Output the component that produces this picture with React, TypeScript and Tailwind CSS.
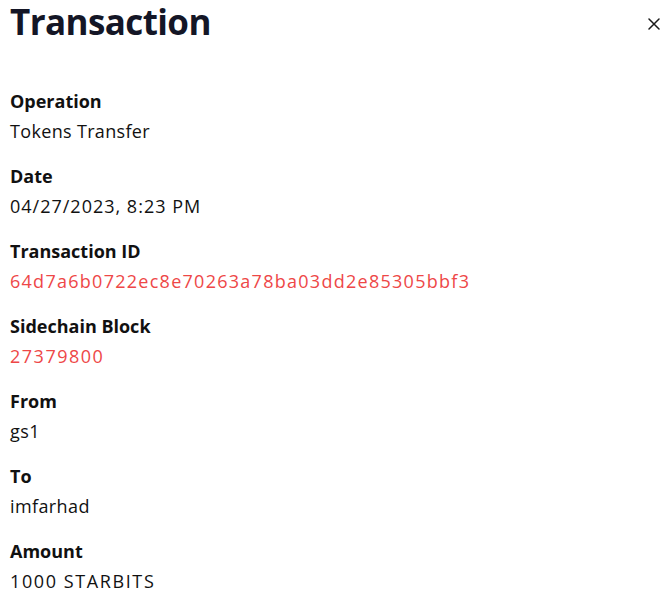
import React from "react";

const items: { label: string; value: string; red?: boolean; track: string }[] = [
  { label: "Operation", value: "Tokens Transfer", track: "tracking-[0.33px]" },
  { label: "Date", value: "04/27/2023, 8:23 PM", track: "tracking-[1px]" },
  { label: "Transaction ID", value: "64d7a6b0722ec8e70263a78ba03dd2e85305bbf3", red: true, track: "tracking-[1.27px]" },
  { label: "Sidechain Block", value: "27379800", red: true, track: "tracking-[1.5px]" },
  { label: "From", value: "gs1", track: "tracking-[0.5px]" },
  { label: "To", value: "imfarhad", track: "tracking-[0.4px]" },
  { label: "Amount", value: "1000 STARBITS", track: "tracking-[1.6px]" },
];

export default function App() {
  return (
    <div className="w-[672px] h-[602px] bg-white overflow-hidden text-[#111111]" style={{ fontFamily: "'Open Sans', 'Noto Sans', sans-serif" }}>
      <div className="flex items-start justify-between pl-[10px] pr-[12px] pt-[1px]">
        <h1 className="text-[35px] leading-[41px] font-bold tracking-[-0.6px] text-[#141626]">Transaction</h1>
        <button className="mt-[17px] text-[#1a1a1a]" aria-label="close">
          <svg width="12" height="12" viewBox="0 0 12 12" fill="none" stroke="currentColor" strokeWidth="1.5" strokeLinecap="round">
            <path d="M1 1 L11 11 M11 1 L1 11" />
          </svg>
        </button>
      </div>
      <div className="flex flex-col gap-[15px] pl-[10px] mt-[44px]">
        {items.map((it) => (
          <div key={it.label} className="flex flex-col">
            <div className="text-[18px] leading-[30px] font-bold">{it.label}</div>
            <div className={"text-[18px] leading-[30px] " + it.track + " " + (it.red ? "text-[#ee4747]" : "text-[#111111]")}>{it.value}</div>
          </div>
        ))}
      </div>
    </div>
  );
}
